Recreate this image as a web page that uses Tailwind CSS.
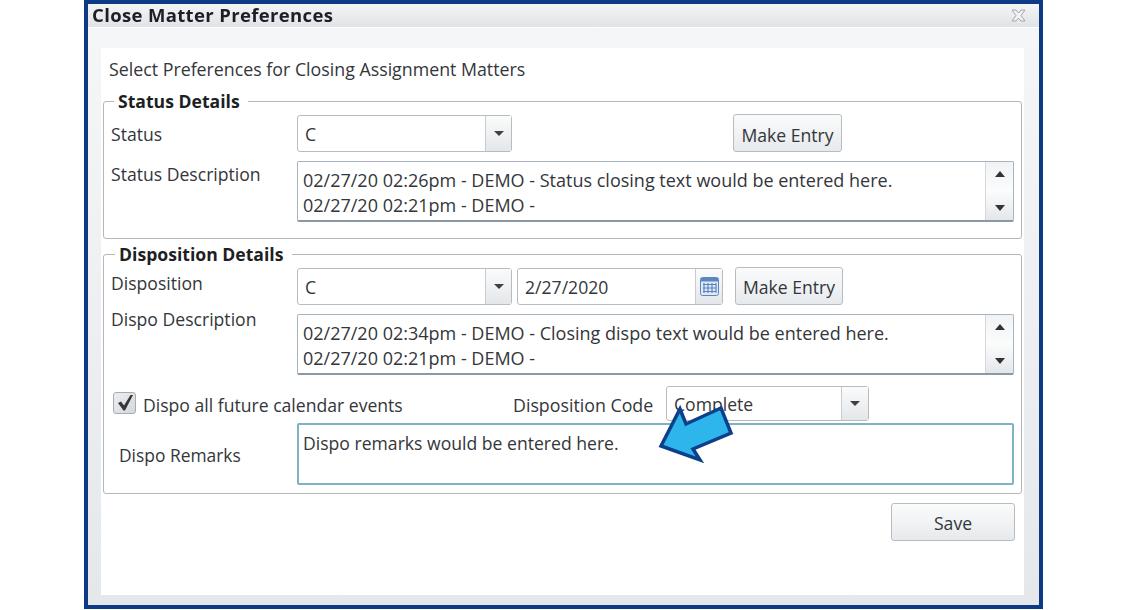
<!DOCTYPE html>
<html lang="en">
<head>
  <meta charset="UTF-8">
  <title>Close Matter Preferences</title>
  <script src="https://cdn.jsdelivr.net/npm/@tailwindcss/browser@4"></script>
</head>
<body class="bg-white font-['Open_Sans',sans-serif] text-[17.6px] leading-[20px] text-[#33363a] overflow-hidden">
  <div class="relative ml-[84px] w-[959px] h-[609px] border-4 border-[#0d3a85] flex flex-col blur-[0.4px]">
    <!-- title bar -->
    <div class="h-[23px] shrink-0 flex items-center justify-between pl-[4px] pr-[13px] bg-gradient-to-b from-[#f3f4f5] to-[#e1e4e7]">
      <span class="font-bold text-[18.5px] tracking-[0.35px] -mt-[1px] text-[#1c1f24]">Close Matter Preferences</span>
      <svg class="w-[15px] h-[13px]" viewBox="0 0 15 13"><path d="M1 1h4l2.500 3 2.500-3h4l-4 5.500 4 5.500h-4l-2.500-3-2.500 3h-4l4-5.500z" fill="#f2f3f4" stroke="#a3a7ab" stroke-width="1"/></svg>
    </div>
    <div class="flex-1 flex flex-col mt-px pt-[20px] pl-[13px] pr-[15px] pb-[10px] bg-gradient-to-b from-[#f5f6f8] to-[#e5e8eb]">
      <div class="flex-1 bg-white pt-[10px] px-[2px]">
        <div class="h-[22px] pl-[6px] mb-[11px] flex items-center text-[17.8px]">Select Preferences for Closing Assignment Matters</div>

        <!-- status details -->
        <fieldset class="border border-[#b4b7ba] rounded-[3px] h-[148px] pl-[7px] pr-[7px]">
          <legend class="ml-[3px] pl-[4px] pr-[8px] font-bold text-[17.6px] leading-[20px] -mt-[1px] text-[#1c1f24]">Status Details</legend>
          <div class="flex items-center h-[38px] mt-[3px]">
            <div class="w-[186px] mt-[2px]">Status</div>
            <div class="w-[215px] h-[37px] mt-px flex border border-[#b9bcbf] rounded-[3px]">
              <div class="flex-1 pl-[7px] flex items-center">C</div>
              <div class="w-[26px] flex items-center justify-center border-l border-[#c9cccf] bg-gradient-to-b from-[#fafbfb] to-[#e4e7ea]">
                <div class="w-0 h-0 border-x-[5px] border-x-transparent border-t-[5px] border-t-[#3c4146]"></div>
              </div>
            </div>
            <button class="ml-[221px] w-[109px] h-[38px] pt-[3px] border border-[#b9bcbf] rounded-[3px] bg-gradient-to-b from-[#fafbfb] to-[#e7eaed]">Make Entry</button>
          </div>
          <div class="flex mt-[9px]">
            <div class="w-[186px] mt-[3px]">Status Description</div>
            <div class="w-[717px] h-[61px] flex border border-[#a7b3bf] border-b-[#8a99a6] border-b-2 rounded-[2px]">
              <div class="flex-1 pl-[5px] pt-[6px] leading-[25px] text-[18px]">02/27/20 02:26pm - DEMO - Status closing text would be entered here.<br>02/27/20 02:21pm - DEMO -</div>
              <div class="w-[28px] flex flex-col items-center justify-between py-[9px] border-l border-[#d5d8db] bg-gradient-to-b from-[#f0f2f4] via-[#fbfcfc] to-[#e4e7ea]">
                <div class="w-0 h-0 border-x-[5px] border-x-transparent border-b-[6px] border-b-[#2f3438]"></div>
                <div class="w-0 h-0 border-x-[5px] border-x-transparent border-t-[6px] border-t-[#2f3438]"></div>
              </div>
            </div>
          </div>
        </fieldset>

        <!-- disposition details -->
        <fieldset class="border border-[#b4b7ba] rounded-[3px] h-[250px] mt-[5px] pl-[7px] pr-[7px]">
          <legend class="ml-[4px] pl-[4px] pr-[9px] font-bold text-[17.6px] leading-[20px] -mt-[1px] text-[#1c1f24]">Disposition Details</legend>
          <div class="flex h-[38px] mt-[3px]">
            <div class="w-[186px] mt-[6px]">Disposition</div>
            <div class="w-[215px] h-[37px] mt-px flex border border-[#b9bcbf] rounded-[3px]">
              <div class="flex-1 pl-[7px] pt-[1px] flex items-center">C</div>
              <div class="w-[26px] flex items-center justify-center border-l border-[#c9cccf] bg-gradient-to-b from-[#fafbfb] to-[#e4e7ea]">
                <div class="w-0 h-0 border-x-[5px] border-x-transparent border-t-[5px] border-t-[#3c4146]"></div>
              </div>
            </div>
            <div class="ml-[5px] w-[206px] h-[37px] mt-px flex border border-[#b9bcbf] rounded-[3px]">
              <div class="flex-1 pl-[7px] pt-[1px] flex items-center">2/27/2020</div>
              <div class="w-[27px] flex items-center justify-center border-l border-[#c9cccf] bg-gradient-to-b from-[#fafbfb] to-[#e4e7ea]">
                <svg class="w-[19px] h-[19px]" viewBox="0 0 19 19">
                  <rect x="0.500" y="0.500" width="18" height="18" rx="2" fill="#dfe9f6" stroke="#5c86c0"/>
                  <rect x="1" y="1" width="17" height="3.500" fill="#5c86c0"/>
                  <path d="M4 6v10M8 6v10M12 6v10M16 6v10M3 7.500h13M3 11h13M3 14.500h13" stroke="#5c86c0" stroke-width="1.200" fill="none"/>
                </svg>
              </div>
            </div>
            <button class="ml-[12px] w-[108px] h-[38px] pt-[2px] border border-[#b9bcbf] rounded-[3px] bg-gradient-to-b from-[#fafbfb] to-[#e7eaed]">Make Entry</button>
          </div>
          <div class="flex mt-[9px]">
            <div class="w-[186px] -mt-[5px]">Dispo Description</div>
            <div class="w-[717px] h-[61px] flex border border-[#a7b3bf] border-b-[#8a99a6] border-b-2 rounded-[2px]">
              <div class="flex-1 pl-[5px] pt-[6px] leading-[25px] text-[18px]">02/27/20 02:34pm - DEMO - Closing dispo text would be entered here.<br>02/27/20 02:21pm - DEMO -</div>
              <div class="w-[28px] flex flex-col items-center justify-between py-[9px] border-l border-[#d5d8db] bg-gradient-to-b from-[#f0f2f4] via-[#fbfcfc] to-[#e4e7ea]">
                <div class="w-0 h-0 border-x-[5px] border-x-transparent border-b-[6px] border-b-[#2f3438]"></div>
                <div class="w-0 h-0 border-x-[5px] border-x-transparent border-t-[6px] border-t-[#2f3438]"></div>
              </div>
            </div>
          </div>
          <div class="flex items-center h-[35px] mt-[11px]">
            <div class="ml-[2px] w-[23px] h-[22px] mt-[-2px] flex items-center justify-center border border-[#a9acaf] rounded-[3px] bg-gradient-to-br from-[#eceef0] to-[#d5d8db]">
              <svg class="w-[21px] h-[20px]" viewBox="0 0 21 20"><path d="M4 10l3-1.500 3 4L16.500 2H19L11 17.500H9.500z" fill="#33373b"/></svg>
            </div>
            <span class="ml-[7px] mt-[2px] w-[370px]">Dispo all future calendar events</span>
            <span class="mt-[2px] w-[153px] text-[17.8px]">Disposition Code</span>
            <div class="w-[203px] h-[35px] flex border border-[#b9bcbf] rounded-[3px]">
              <div class="flex-1 pl-[7px] pt-[1px] flex items-center">Complete</div>
              <div class="w-[27px] flex items-center justify-center border-l border-[#c9cccf] bg-gradient-to-b from-[#fafbfb] to-[#e4e7ea]">
                <div class="w-0 h-0 border-x-[5px] border-x-transparent border-t-[5px] border-t-[#3c4146]"></div>
              </div>
            </div>
          </div>
          <div class="flex mt-[2px]">
            <div class="w-[186px] pl-[8px] pt-[22px] text-[17.4px]">Dispo Remarks</div>
            <div class="w-[717px] h-[62px] pl-[4px] pt-[8px] border-2 border-[#7fb3c4] rounded-[2px]">Dispo remarks would be entered here.</div>
          </div>
        </fieldset>

        <div class="flex justify-end pr-[7px] mt-[9px]">
          <button class="w-[124px] h-[38px] pt-[2px] border border-[#b9bcbf] rounded-[3px] bg-gradient-to-b from-[#fafbfb] to-[#e7eaed]">Save</button>
        </div>
      </div>
    </div>

    <!-- callout arrow over the form -->
    <svg class="absolute left-[562px] top-[398px] w-[90px] h-[70px]" viewBox="0 0 90 70">
      <polygon points="11,44 30,7 36,22 71,6 81,31 43,47 50,58" fill="#2db5ec" stroke="#0d3f8a" stroke-width="3.500" stroke-linejoin="miter" stroke-miterlimit="10"/>
    </svg>
  </div>
</body>
</html>
